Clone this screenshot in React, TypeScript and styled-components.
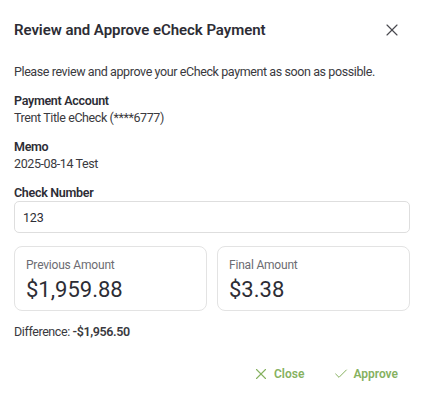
import React from "react";
import styled, { createGlobalStyle } from "styled-components";
import { X, Check } from "lucide-react";

const Global = createGlobalStyle`
  html, body { margin: 0; padding: 0; background: #ffffff; }
  body { font-family: Roboto, "Noto Sans", Arial, sans-serif; color: #34343c; }
  * { box-sizing: border-box; }
`;

const Dialog = styled.div`
  width: 423px;
  padding: 20px 13px 20px 14px;
  display: flex;
  flex-direction: column;
`;

const Header = styled.div`
  display: flex;
  align-items: center;
  justify-content: space-between;
`;

const Title = styled.h2`
  margin: 0;
  font-size: 15px;
  line-height: 20px;
  font-weight: 600;
  letter-spacing: -0.05px;
  color: #2d2d35;
`;

const IconButton = styled.button`
  border: 0;
  background: transparent;
  padding: 0;
  margin-right: 8px;
  display: flex;
  color: #4a4a50;
  cursor: pointer;
`;

const Text = styled.p<{ $mt?: number }>`
  margin: ${(p) => p.$mt ?? 0}px 0 0;
  font-size: 12.5px;
  line-height: 17px;
  letter-spacing: -0.4px;
  color: #3a3a40;
`;

const Field = styled.div<{ $mt: number }>`
  margin-top: ${(p) => p.$mt}px;
  display: flex;
  flex-direction: column;
`;

const Label = styled.div`
  font-size: 12.5px;
  line-height: 17px;
  font-weight: 600;
  letter-spacing: -0.3px;
  color: #2d2d35;
`;

const Input = styled.input`
  height: 32px;
  width: 100%;
  border: 1px solid #dedede;
  border-radius: 5px;
  padding: 0 8px;
  font-family: inherit;
  font-size: 12.5px;
  letter-spacing: -0.2px;
  color: #2d2d35;
  outline: none;
`;

const Cards = styled.div`
  margin-top: 13px;
  display: grid;
  grid-template-columns: 1fr 1fr;
  gap: 10px;
`;

const Card = styled.div`
  height: 65px;
  border: 1px solid #e3e3e3;
  border-radius: 8px;
  padding: 10px 11px 6px;
  display: flex;
  flex-direction: column;
`;

const CardLabel = styled.div`
  font-size: 12px;
  line-height: 16px;
  letter-spacing: -0.2px;
  color: #6c6c72;
`;

const Amount = styled.div`
  margin-top: 2.5px;
  font-size: 22px;
  line-height: 28px;
  color: #2d2d35;
`;

const Strong = styled.strong`
  font-weight: 600;
`;

const Footer = styled.div`
  margin-top: 25px;
  display: flex;
  justify-content: flex-end;
  gap: 5px;
`;

const ActionButton = styled.button`
  border: 0;
  background: transparent;
  padding: 0 12px;
  height: 17px;
  display: flex;
  align-items: center;
  gap: 4px;
  font-family: inherit;
  font-size: 12px;
  font-weight: 600;
  color: #86b15f;
  cursor: pointer;
`;

export default function App() {
  return (
    <>
      <Global />
      <Dialog>
        <Header>
          <Title>Review and Approve eCheck Payment</Title>
          <IconButton aria-label="Close">
            <X size={20} strokeWidth={1.4} />
          </IconButton>
        </Header>
        <Text $mt={23}>
          Please review and approve your eCheck payment as soon as possible.
        </Text>
        <Field $mt={12}>
          <Label>Payment Account</Label>
          <Text>Trent Title eCheck (****6777)</Text>
        </Field>
        <Field $mt={12}>
          <Label>Memo</Label>
          <Text>2025-08-14 Test</Text>
        </Field>
        <Field $mt={12}>
          <Label>Check Number</Label>
          <Input defaultValue="123" />
        </Field>
        <Cards>
          <Card>
            <CardLabel>Previous Amount</CardLabel>
            <Amount>$1,959.88</Amount>
          </Card>
          <Card>
            <CardLabel>Final Amount</CardLabel>
            <Amount>$3.38</Amount>
          </Card>
        </Cards>
        <Text $mt={12}>
          Difference: <Strong>-$1,956.50</Strong>
        </Text>
        <Footer>
          <ActionButton>
            <X size={18} strokeWidth={1.5} />
            Close
          </ActionButton>
          <ActionButton>
            <Check size={16} strokeWidth={1.5} />
            Approve
          </ActionButton>
        </Footer>
      </Dialog>
    </>
  );
}
